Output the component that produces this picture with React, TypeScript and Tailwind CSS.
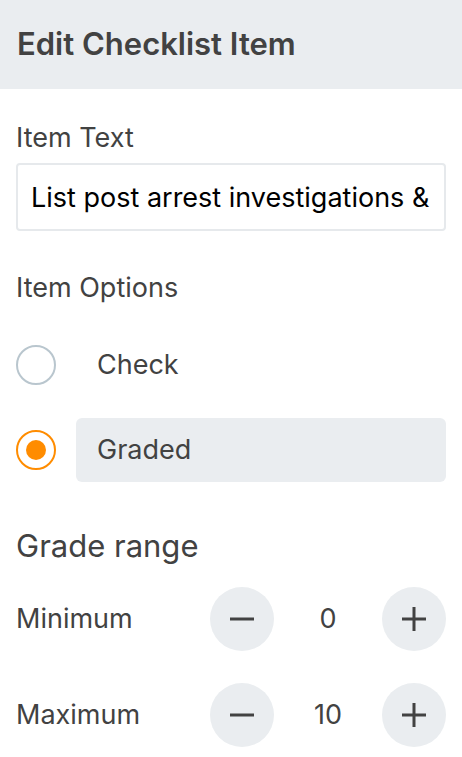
import { useState } from 'react';

const font = { fontFamily: 'Inter, "Noto Sans", sans-serif' };

function Stepper({ label, value, onChange }: { label: string; value: number; onChange: (v: number) => void }) {
  return (
    <div className="flex items-center h-16">
      <span className="flex-1 text-[27px] text-[#424242]">{label}</span>
      <button onClick={() => onChange(value - 1)} className="w-16 h-16 rounded-full bg-[#eaedf0] flex items-center justify-center">
        <svg width="26" height="26" viewBox="0 0 26 26"><path d="M1 13h24" stroke="#424242" strokeWidth="3" /></svg>
      </button>
      <span className="w-[108px] text-center text-[27px] text-[#424242]">{value}</span>
      <button onClick={() => onChange(value + 1)} className="w-16 h-16 rounded-full bg-[#eaedf0] flex items-center justify-center">
        <svg width="26" height="26" viewBox="0 0 26 26"><path d="M1 13h24M13 1v24" stroke="#424242" strokeWidth="3" /></svg>
      </button>
    </div>
  );
}

export default function App() {
  const [mode, setMode] = useState<'check' | 'graded'>('graded');
  const [min, setMin] = useState(0);
  const [max, setMax] = useState(10);
  const [text, setText] = useState('List post arrest investigations & procedures');

  return (
    <div className="w-[462px] h-[757px] bg-white overflow-hidden" style={font}>
      <div className="h-[89px] bg-[#eaedf0] flex items-center px-[17px]">
        <h1 className="text-[31px] font-semibold text-[#424242]">Edit Checklist Item</h1>
      </div>
      <div className="px-4">
        <div className="mt-[33px] h-8 leading-8 text-[27px] text-[#424242]">Item Text</div>
        <input
          value={text}
          onChange={e => setText(e.target.value)}
          className="mt-[9px] w-full h-[68px] border-2 border-[#e6e9ec] rounded-[4px] px-[13px] text-[27px] text-black outline-none"
        />
        <div className="mt-[41px] h-8 leading-8 text-[27px] text-[#424242]">Item Options</div>

        <div className="mt-[29px] flex items-center h-16 cursor-pointer" onClick={() => setMode('check')}>
          <span className={`w-10 h-10 rounded-full border-2 flex items-center justify-center ${mode === 'check' ? 'border-[#ff8c00]' : 'border-[#b9c6ce]'}`}>
            {mode === 'check' && <span className="w-5 h-5 rounded-full bg-[#ff8c00]" />}
          </span>
          <span className={`ml-5 flex-1 h-16 rounded-md flex items-center px-[21px] text-[27px] text-[#424242] ${mode === 'check' ? 'bg-[#eaedf0]' : ''}`}>Check</span>
        </div>

        <div className="mt-[21px] flex items-center h-16 cursor-pointer" onClick={() => setMode('graded')}>
          <span className={`w-10 h-10 rounded-full border-2 flex items-center justify-center ${mode === 'graded' ? 'border-[#ff8c00]' : 'border-[#b9c6ce]'}`}>
            {mode === 'graded' && <span className="w-5 h-5 rounded-full bg-[#ff8c00]" />}
          </span>
          <span className={`ml-5 flex-1 h-16 rounded-md flex items-center px-[21px] text-[27px] text-[#424242] ${mode === 'graded' ? 'bg-[#eaedf0]' : ''}`}>Graded</span>
        </div>

        <div className="mt-[46px] h-9 leading-9 text-[31px] text-[#424242]">Grade range</div>
        <div className="mt-[23px]"><Stepper label="Minimum" value={min} onChange={setMin} /></div>
        <div className="mt-8"><Stepper label="Maximum" value={max} onChange={setMax} /></div>
      </div>
    </div>
  );
}
